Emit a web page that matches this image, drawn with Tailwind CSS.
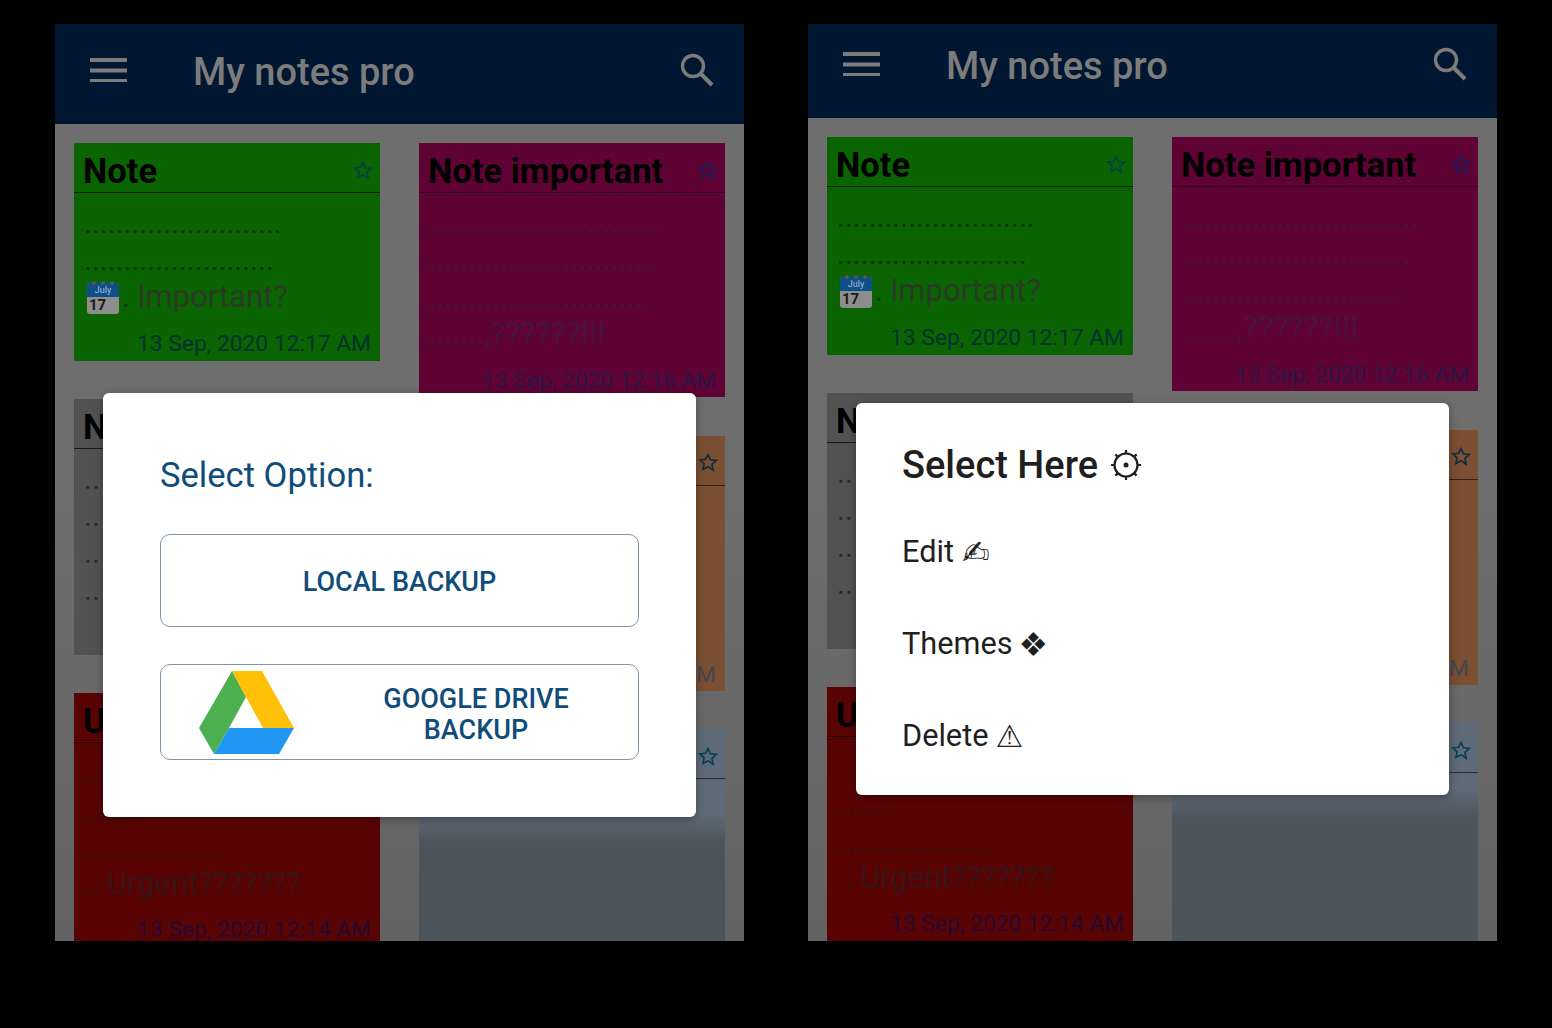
<!DOCTYPE html>
<html>
<head>
<meta charset="utf-8">
<script src="https://cdn.jsdelivr.net/npm/@tailwindcss/browser@4"></script>
</head>
<body class="bg-black w-[1552px] h-[1028px] overflow-hidden font-['Roboto',sans-serif]">
<main class="flex gap-[64px] pl-[55px] pt-[24px]">

<!-- LEFT PHONE -->
<section class="relative w-[689px] h-[917px] overflow-hidden bg-linear-to-b from-[#6e6e6e] from-[50%] to-[#636363]">
  <header class="h-[100px] pb-[4px] bg-[#011731] flex items-center pl-[35px] pr-[30px] text-[#7c7c7c]">
    <svg width="37" height="24" viewBox="0 0 37 24" class="shrink-0 -mt-[5px]"><path d="M0 2h37M0 12.500h37M0 23h37" stroke="#7c7c7c" stroke-width="3.800"/></svg>
    <h1 class="ml-[66px] text-[38px] font-medium whitespace-nowrap">My notes pro</h1>
    <svg width="34" height="34" viewBox="0 0 34 34" class="ml-auto -mt-[5px]" fill="none" stroke="#7c7c7c"><circle cx="13" cy="13" r="10.5" stroke-width="3.4"/><path d="M20.5 20.5L32 32" stroke-width="4"/></svg>
  </header>
  <div class="grid grid-cols-2 gap-x-[39px] px-[19px] pt-[19px]">
    <div class="flex flex-col gap-[38px]">
      <article class="bg-[#0a6402]">
        <div class="h-[50px] pt-[5px] border-b border-black/70 flex items-center justify-between pl-[9px] pr-[7px]"><h2 class="mt-[3px] text-[34.500px] font-bold text-black leading-none">Note</h2><svg width="20" height="21" viewBox="0 0 24 24" fill="none" stroke="#083f45" stroke-width="2"><path d="M12 2.5l2.9 6.3 6.9.8-5.1 4.7 1.4 6.8L12 17l-6.1 3.4 1.4-6.8-5.100-4.700 6.900-.8z"/></svg></div>
        <div class="pt-[11px] pl-[10px] text-[30px] leading-[37px] text-[#10300e] whitespace-nowrap">
          <p>.........................</p><p>........................</p>
          <p class="flex items-center ml-[3px]"><svg width="32" height="34" viewBox="0 0 32 34" class="shrink-0"><rect y="3" width="32" height="31" rx="3" fill="#8d8d8d"/><path d="M0 6a3 3 0 013-3h26a3 3 0 013 3v11H0z" fill="#0d4f8a"/><circle cx="7" cy="3" r="2" fill="#555"/><circle cx="16" cy="3" r="2" fill="#555"/><circle cx="25" cy="3" r="2" fill="#555"/><text x="16" y="13" font-size="9" text-anchor="middle" fill="#a9c0d6">July</text><text x="2" y="30" font-size="15" font-weight="700" fill="#1a1a1a">17</text></svg><span class="ml-[3px]">.</span><span class="ml-[7px] text-[31px] text-[#2a3a26]">Important?</span></p>
        </div>
        <p class="mt-[15px] pr-[9px] pb-[4px] text-right text-[22.800px] leading-[27px] text-[#04332f]">13 Sep, 2020 12:17 AM</p>
      </article>
      <article class="bg-[#525252] h-[256px]">
        <div class="h-[50px] pt-[5px] border-b border-black/70 flex items-center pl-[9px]"><h2 class="mt-[3px] text-[34.500px] font-bold text-black leading-none">N</h2></div>
        <div class="pt-[11px] pl-[10px] text-[30px] leading-[37px] text-[#2a2a2a] whitespace-nowrap"><p>..</p><p>..</p><p>..</p><p>..</p></div>
      </article>
      <article class="bg-[#580405] h-[300px]">
        <div class="h-[50px] pt-[5px] border-b border-black/70 flex items-center pl-[9px]"><h2 class="mt-[3px] text-[34.500px] font-bold text-black leading-none">U</h2></div>
        <div class="pt-[11px] pl-[10px] text-[30px] leading-[37px] text-[#381418] whitespace-nowrap"><p>..</p><p>.......</p><p>...................</p><p>.. <span class="text-[31px]">Urgent???????</span></p></div>
        <p class="mt-[17px] pr-[9px] text-right text-[22.800px] leading-[22px] text-[#28082c]">13 Sep, 2020 12:14 AM</p>
      </article>
    </div>
    <div class="flex flex-col gap-[38.500px]">
      <article class="bg-[#5f0334]">
        <div class="h-[50px] pt-[5px] border-b border-black/40 flex items-center justify-between pl-[9px] pr-[7px]"><h2 class="mt-[3px] text-[34.500px] font-bold text-black leading-none">Note important</h2><svg width="20" height="21" viewBox="0 0 24 24" fill="none" stroke="#251a55" stroke-width="2.600"><path d="M12 2.5l2.9 6.3 6.9.8-5.1 4.7 1.4 6.8L12 17l-6.1 3.4 1.4-6.8-5.100-4.700 6.900-.8z"/></svg></div>
        <div class="pt-[11px] pl-[10px] text-[30px] leading-[37px] text-[#45153f] whitespace-nowrap"><p>..............................</p><p>.............................</p><p>............................</p><p>.......,<span class="text-[32px]">??????!!!</span></p></div>
        <p class="mt-[15px] pr-[9px] pb-[3px] text-right text-[22.800px] leading-[27px] text-[#2c1443]">13 Sep, 2020 12:16 AM</p>
      </article>
      <article class="bg-[#7a4f33] h-[255px] flex flex-col">
        <div class="h-[50px] pt-[5px] border-b border-black/60 flex items-center justify-end pr-[7px]"><svg width="20" height="21" viewBox="0 0 24 24" fill="none" stroke="#0f2c3c" stroke-width="2"><path d="M12 2.5l2.9 6.3 6.9.8-5.1 4.7 1.4 6.800L12 17l-6.1 3.4 1.4-6.8-5.100-4.700 6.900-.8z"/></svg></div>
        <p class="mt-auto pr-[9px] pb-[3px] text-right text-[22.800px] leading-[27px] text-[#45454f]">M</p>
      </article>
      <article class="h-[300px] bg-linear-to-b from-[#5f6a78] from-[28%] to-[#4c555c] to-[38%]">
        <div class="h-[50px] pt-[5px] border-b border-black/60 flex items-center justify-end pr-[7px]"><svg width="20" height="21" viewBox="0 0 24 24" fill="none" stroke="#083f55" stroke-width="2"><path d="M12 2.5l2.9 6.3 6.9.8-5.1 4.7 1.4 6.800L12 17l-6.1 3.4 1.4-6.8-5.100-4.700 6.900-.8z"/></svg></div>
      </article>
    </div>
  </div>
  <div class="absolute left-[48px] top-[369px] w-[593px] h-[424px] bg-white rounded-[6px] shadow-[0_2px_8px_rgba(0,0,0,0.35)] pt-[64px] px-[57px]">
    <h3 class="text-[34.600px] leading-[36px] text-[#0f4c7a]">Select Option:</h3>
    <button class="mt-[41px] w-[479px] h-[93px] pt-[3px] border border-[#7f95a6] rounded-[10px] text-[27px] font-medium text-[#0f4c7a]">LOCAL BACKUP</button>
    <button class="mt-[37px] w-[479px] h-[96px] border border-[#7f95a6] rounded-[10px] flex items-center pl-[37px] text-[27px] font-medium leading-[31px] text-[#0f4c7a]">
      <svg width="96" height="84" viewBox="0 0 96 84" class="shrink-0"><path d="M34 1L48 27 31 58 16 84 1 58z" fill="#4caf50"/><path d="M34 1H64L96 58H65L48 27z" fill="#ffc107"/><path d="M31 58H96L81 84H16z" fill="#2196f3"/></svg>
      <span class="w-[240px] ml-[62px] mt-[6px] text-center">GOOGLE DRIVE BACKUP</span>
    </button>
  </div>
</section>

<!-- RIGHT PHONE -->
<section class="relative w-[689px] h-[917px] overflow-hidden bg-linear-to-b from-[#6e6e6e] from-[50%] to-[#636363]">
  <header class="h-[94px] pb-[10px] bg-[#011731] flex items-center pl-[35px] pr-[30px] text-[#7c7c7c]">
    <svg width="37" height="24" viewBox="0 0 37 24" class="shrink-0 -mt-[5px]"><path d="M0 2h37M0 12.500h37M0 23h37" stroke="#7c7c7c" stroke-width="3.800"/></svg>
    <h1 class="ml-[66px] text-[38px] font-medium whitespace-nowrap">My notes pro</h1>
    <svg width="34" height="34" viewBox="0 0 34 34" class="ml-auto -mt-[5px]" fill="none" stroke="#7c7c7c"><circle cx="13" cy="13" r="10.5" stroke-width="3.4"/><path d="M20.5 20.5L32 32" stroke-width="4"/></svg>
  </header>
  <div class="grid grid-cols-2 gap-x-[39px] px-[19px] pt-[19px]">
    <div class="flex flex-col gap-[38px]">
      <article class="bg-[#0a6402]">
        <div class="h-[50px] pt-[5px] border-b border-black/70 flex items-center justify-between pl-[9px] pr-[7px]"><h2 class="mt-[3px] text-[34.500px] font-bold text-black leading-none">Note</h2><svg width="20" height="21" viewBox="0 0 24 24" fill="none" stroke="#083f45" stroke-width="2"><path d="M12 2.5l2.9 6.3 6.9.8-5.1 4.7 1.4 6.8L12 17l-6.1 3.4 1.4-6.8-5.100-4.700 6.900-.8z"/></svg></div>
        <div class="pt-[11px] pl-[10px] text-[30px] leading-[37px] text-[#10300e] whitespace-nowrap">
          <p>.........................</p><p>........................</p>
          <p class="flex items-center ml-[3px]"><svg width="32" height="34" viewBox="0 0 32 34" class="shrink-0"><rect y="3" width="32" height="31" rx="3" fill="#8d8d8d"/><path d="M0 6a3 3 0 013-3h26a3 3 0 013 3v11H0z" fill="#0d4f8a"/><circle cx="7" cy="3" r="2" fill="#555"/><circle cx="16" cy="3" r="2" fill="#555"/><circle cx="25" cy="3" r="2" fill="#555"/><text x="16" y="13" font-size="9" text-anchor="middle" fill="#a9c0d6">July</text><text x="2" y="30" font-size="15" font-weight="700" fill="#1a1a1a">17</text></svg><span class="ml-[3px]">.</span><span class="ml-[7px] text-[31px] text-[#2a3a26]">Important?</span></p>
        </div>
        <p class="mt-[15px] pr-[9px] pb-[4px] text-right text-[22.800px] leading-[27px] text-[#04332f]">13 Sep, 2020 12:17 AM</p>
      </article>
      <article class="bg-[#525252] h-[256px]">
        <div class="h-[50px] pt-[5px] border-b border-black/70 flex items-center pl-[9px]"><h2 class="mt-[3px] text-[34.500px] font-bold text-black leading-none">N</h2></div>
        <div class="pt-[11px] pl-[10px] text-[30px] leading-[37px] text-[#2a2a2a] whitespace-nowrap"><p>..</p><p>..</p><p>..</p><p>..</p></div>
      </article>
      <article class="bg-[#580405] h-[300px]">
        <div class="h-[50px] pt-[5px] border-b border-black/70 flex items-center pl-[9px]"><h2 class="mt-[3px] text-[34.500px] font-bold text-black leading-none">U</h2></div>
        <div class="pt-[11px] pl-[10px] text-[30px] leading-[37px] text-[#381418] whitespace-nowrap"><p>..</p><p>.......</p><p>...................</p><p>.. <span class="text-[31px]">Urgent???????</span></p></div>
        <p class="mt-[17px] pr-[9px] text-right text-[22.800px] leading-[22px] text-[#28082c]">13 Sep, 2020 12:14 AM</p>
      </article>
    </div>
    <div class="flex flex-col gap-[38.500px]">
      <article class="bg-[#5f0334]">
        <div class="h-[50px] pt-[5px] border-b border-black/40 flex items-center justify-between pl-[9px] pr-[7px]"><h2 class="mt-[3px] text-[34.500px] font-bold text-black leading-none">Note important</h2><svg width="20" height="21" viewBox="0 0 24 24" fill="none" stroke="#251a55" stroke-width="2.600"><path d="M12 2.5l2.9 6.3 6.9.8-5.1 4.7 1.4 6.8L12 17l-6.1 3.4 1.4-6.8-5.100-4.700 6.900-.8z"/></svg></div>
        <div class="pt-[11px] pl-[10px] text-[30px] leading-[37px] text-[#45153f] whitespace-nowrap"><p>..............................</p><p>.............................</p><p>............................</p><p>.......,<span class="text-[32px]">??????!!!</span></p></div>
        <p class="mt-[15px] pr-[9px] pb-[3px] text-right text-[22.800px] leading-[27px] text-[#2c1443]">13 Sep, 2020 12:16 AM</p>
      </article>
      <article class="bg-[#7a4f33] h-[255px] flex flex-col">
        <div class="h-[50px] pt-[5px] border-b border-black/60 flex items-center justify-end pr-[7px]"><svg width="20" height="21" viewBox="0 0 24 24" fill="none" stroke="#0f2c3c" stroke-width="2"><path d="M12 2.5l2.9 6.3 6.9.8-5.1 4.7 1.4 6.800L12 17l-6.1 3.4 1.4-6.8-5.100-4.700 6.900-.8z"/></svg></div>
        <p class="mt-auto pr-[9px] pb-[3px] text-right text-[22.800px] leading-[27px] text-[#45454f]">M</p>
      </article>
      <article class="h-[300px] bg-linear-to-b from-[#5f6a78] from-[22%] to-[#4c555c] to-[32%]">
        <div class="h-[50px] pt-[5px] border-b border-black/60 flex items-center justify-end pr-[7px]"><svg width="20" height="21" viewBox="0 0 24 24" fill="none" stroke="#083f55" stroke-width="2"><path d="M12 2.5l2.9 6.3 6.9.8-5.1 4.7 1.4 6.800L12 17l-6.1 3.4 1.4-6.8-5.100-4.700 6.900-.8z"/></svg></div>
      </article>
    </div>
  </div>
  <div class="absolute left-[48px] top-[379px] w-[593px] h-[392px] bg-white rounded-[6px] shadow-[0_2px_8px_rgba(0,0,0,0.35)] pt-[38px] px-[46px] text-[#1f1f1f]">
    <h3 class="flex items-center gap-[12px] text-[38px] leading-[48px] font-medium">Select Here
      <svg width="32" height="32" viewBox="0 0 32 32" fill="none" stroke="#1f1f1f" stroke-width="2.200"><circle cx="16" cy="16" r="11.500"/><circle cx="16" cy="16" r="2.500" fill="#1f1f1f" stroke="none"/><path d="M16 1v3.500M16 27.500V31M1 16h3.500M27.500 16H31M5.400 5.400l2.500 2.500M24.100 24.100l2.500 2.500M5.400 26.600l2.500-2.500M24.100 7.900l2.500-2.500"/></svg>
    </h3>
    <ul class="mt-[17px] text-[30.700px]">
      <li class="h-[92px] flex items-center gap-[8px]">Edit <span class="font-['DejaVu_Sans'] text-[33px] leading-none">&#x270D;</span></li>
      <li class="h-[92px] flex items-center gap-[6px]">Themes <span class="font-['DejaVu_Sans'] text-[33px] leading-none">&#x2756;</span></li>
      <li class="h-[92px] flex items-center gap-[7px]">Delete <span class="font-['DejaVu_Sans'] text-[31px] leading-none">&#x26A0;</span></li>
    </ul>
  </div>
</section>
</main>
</body>
</html>
